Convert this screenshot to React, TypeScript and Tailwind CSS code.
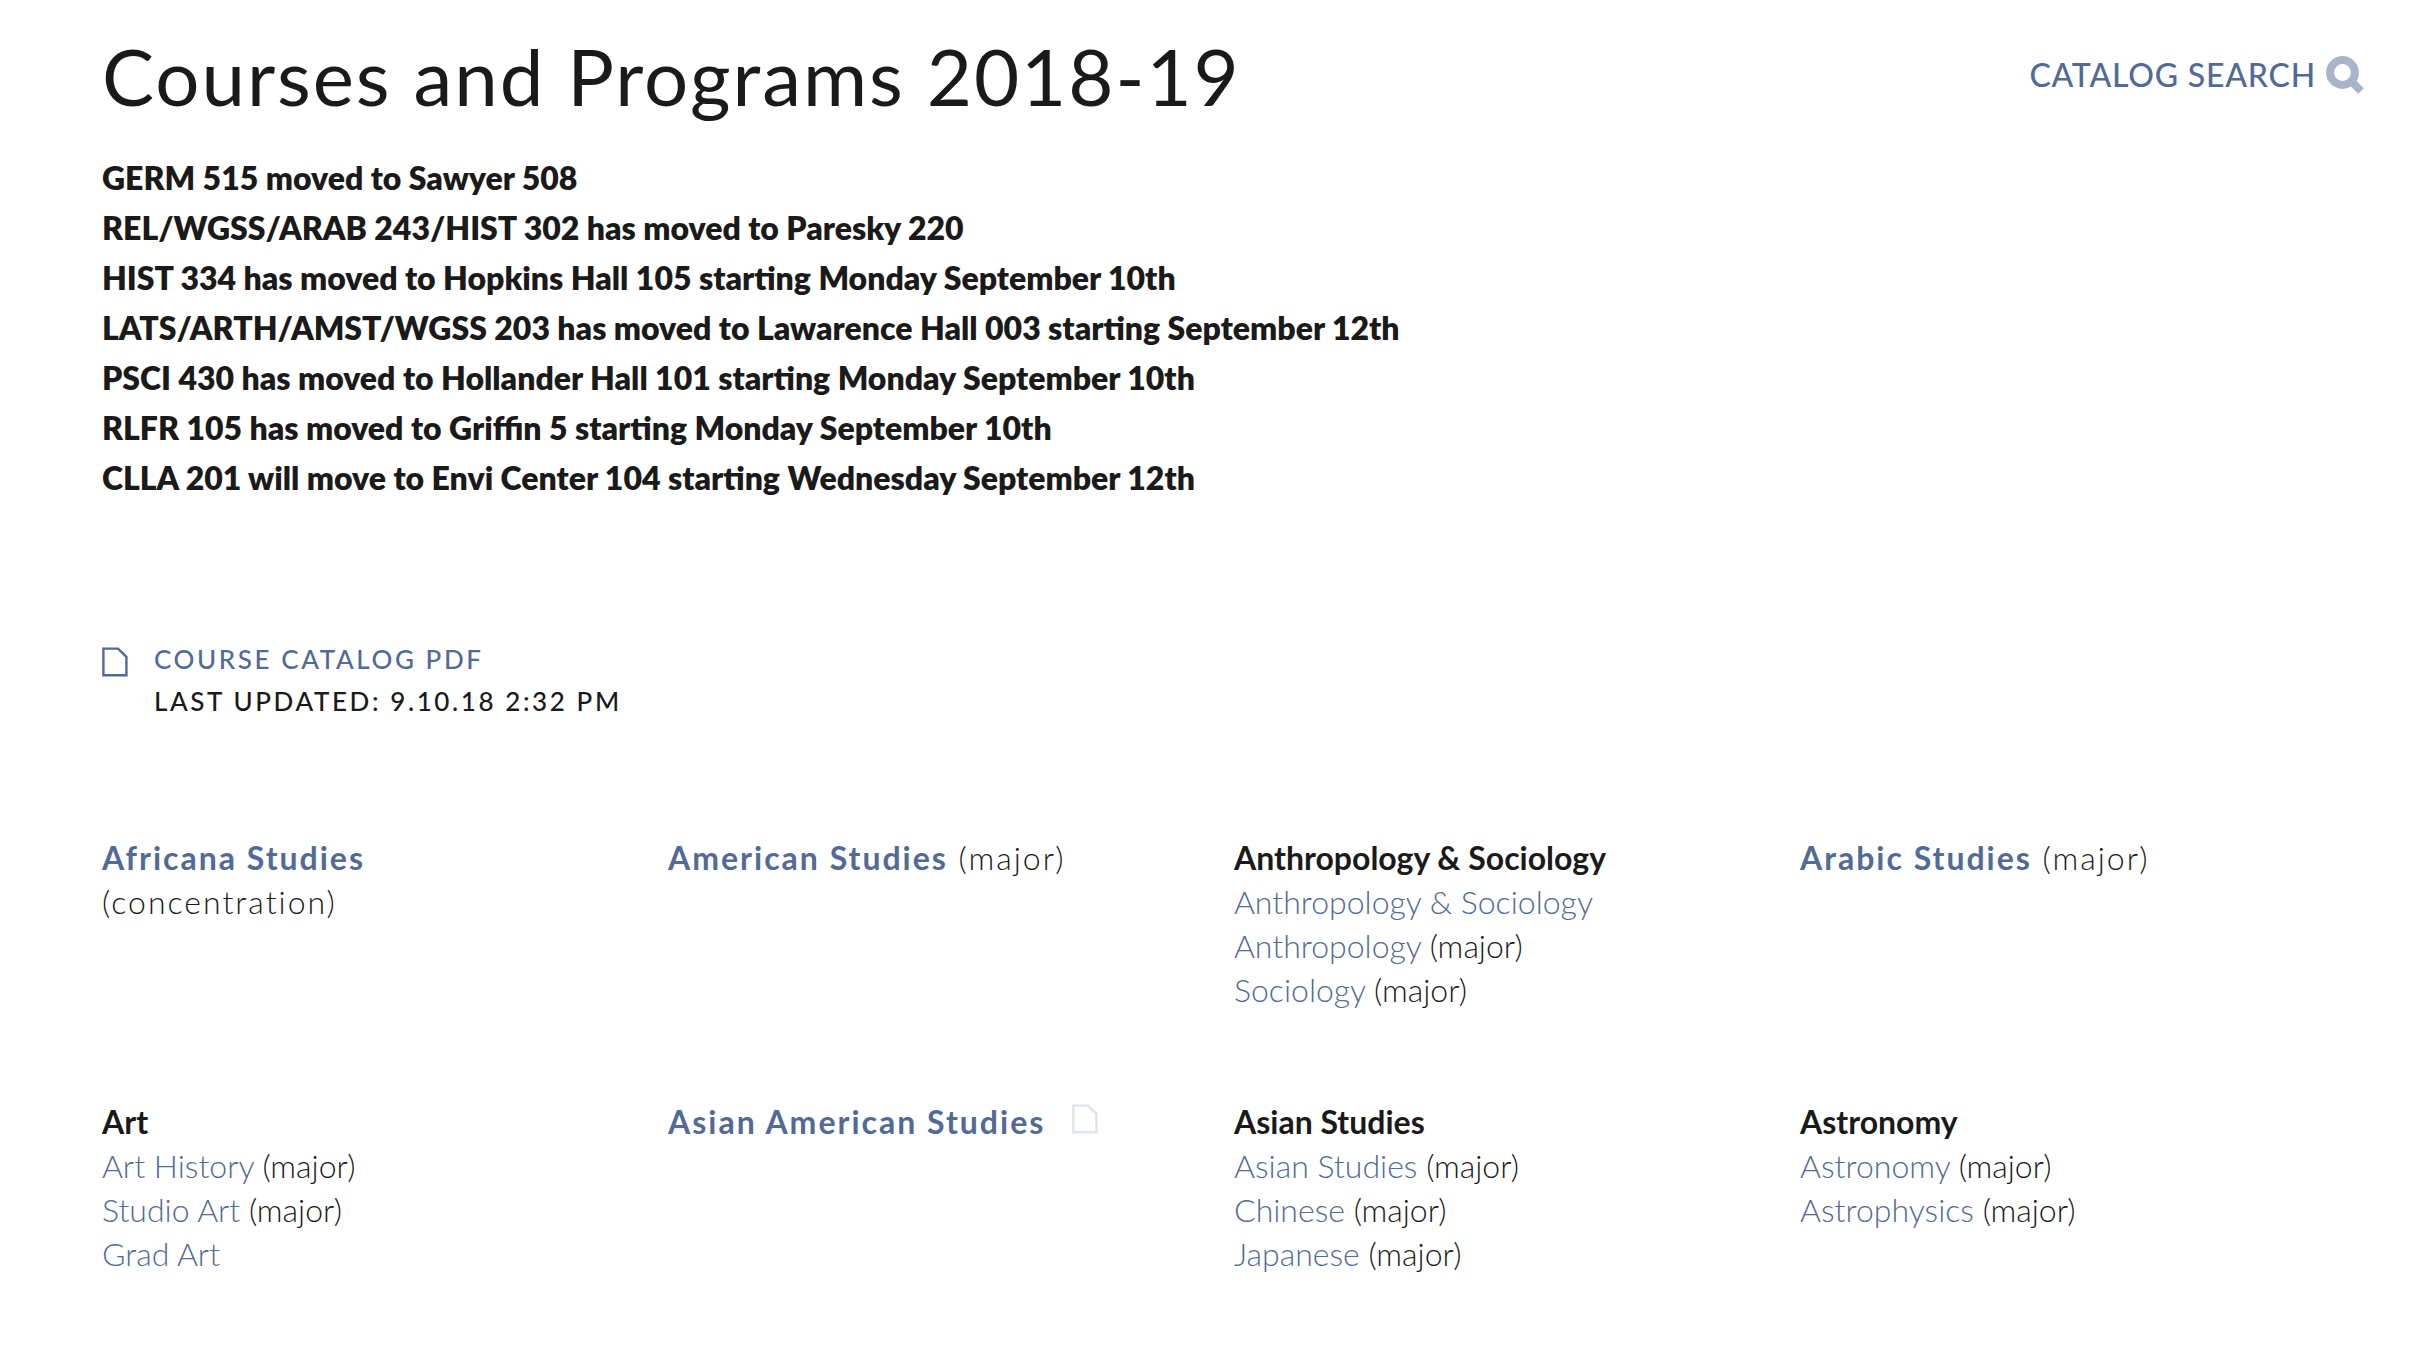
import type { ReactNode } from "react";

type Entry = { name: string; note?: string };
type Program = {
  title: string;
  linked?: boolean;
  note?: string;
  noteBelow?: boolean;
  file?: boolean;
  entries?: Entry[];
};

const notices = [
  "GERM 515 moved to Sawyer 508",
  "REL/WGSS/ARAB 243/HIST 302 has moved to Paresky 220",
  "HIST 334 has moved to Hopkins Hall 105 starting Monday September 10th",
  "LATS/ARTH/AMST/WGSS 203 has moved to Lawarence Hall 003 starting September 12th",
  "PSCI 430 has moved to Hollander Hall 101 starting Monday September 10th",
  "RLFR 105 has moved to Griffin 5 starting Monday September 10th",
  "CLLA 201 will move to Envi Center 104 starting Wednesday September 12th",
];

const programs: Program[] = [
  { title: "Africana Studies", linked: true, note: "(concentration)", noteBelow: true },
  { title: "American Studies", linked: true, note: "(major)" },
  {
    title: "Anthropology & Sociology",
    entries: [
      { name: "Anthropology & Sociology" },
      { name: "Anthropology", note: "(major)" },
      { name: "Sociology", note: "(major)" },
    ],
  },
  { title: "Arabic Studies", linked: true, note: "(major)" },
  {
    title: "Art",
    entries: [
      { name: "Art History", note: "(major)" },
      { name: "Studio Art", note: "(major)" },
      { name: "Grad Art" },
    ],
  },
  { title: "Asian American Studies", linked: true, file: true },
  {
    title: "Asian Studies",
    entries: [
      { name: "Asian Studies", note: "(major)" },
      { name: "Chinese", note: "(major)" },
      { name: "Japanese", note: "(major)" },
    ],
  },
  {
    title: "Astronomy",
    entries: [
      { name: "Astronomy", note: "(major)" },
      { name: "Astrophysics", note: "(major)" },
    ],
  },
];

function FileIcon({ className }: { className: string }) {
  return (
    <svg viewBox="0 0 26 30" className={className} fill="none" stroke="currentColor" strokeWidth="2.4" aria-hidden="true">
      <path d="M1.4 1.6H16L24.4 9.8V28.2H1.4Z" />
    </svg>
  );
}

function SearchIcon() {
  return (
    <svg viewBox="0 0 38 38" className="size-[38px] text-[#a8b4ca]" fill="none" stroke="currentColor" strokeWidth="8" aria-hidden="true">
      <circle cx="16.5" cy="16.5" r="12.4" />
      <path d="M25 25L35 35" />
    </svg>
  );
}

function Link({ children, className = "" }: { children: ReactNode; className?: string }) {
  return (
    <a href="#" className={`text-[#526a96] hover:underline ${className}`}>
      {children}
    </a>
  );
}

function ProgramCard({ program }: { program: Program }) {
  if (program.linked) {
    return (
      <li className="tracking-[2px]">
        <Link className="font-bold">{program.title}</Link>
        {program.noteBelow ? <br /> : " "}
        {program.note}
        {program.file && <FileIcon className="ml-4 inline-block h-[30px] w-[26px] align-baseline text-[#dfe3ec]" />}
      </li>
    );
  }
  return (
    <li>
      <h2 className="font-bold">{program.title}</h2>
      <ul>
        {program.entries?.map((e) => (
          <li key={e.name}>
            <Link>{e.name}</Link> {e.note}
          </li>
        ))}
      </ul>
    </li>
  );
}

export default function App() {
  return (
    <main className="min-h-screen bg-white pt-7 pr-16 pb-16 pl-[102px] font-['Lato',sans-serif] text-[32px] leading-[44px] text-[#1a1a1a]">
      <header className="flex items-start justify-between">
        <h1 className="text-[78px] leading-[96px] tracking-wide">Courses and Programs 2018-19</h1>
        <a href="#" className="mt-[25px] mr-0.5 flex items-center gap-2.5 font-medium tracking-wide text-[#526a96]">
          CATALOG SEARCH
          <SearchIcon />
        </a>
      </header>

      <section className="mt-[29px] text-[32px] leading-[50px] font-extrabold">
        {notices.map((n) => (
          <p key={n}>{n}</p>
        ))}
      </section>

      <section className="mt-[135px] flex items-start text-[26px] leading-[42px] font-medium tracking-widest">
        <FileIcon className="mt-[9px] mr-[26px] h-[30px] w-[26px] text-[#526a96]" />
        <div>
          <Link>COURSE CATALOG PDF</Link>
          <p>LAST UPDATED: 9.10.18 2:32 PM</p>
        </div>
      </section>

      <ul className="mt-[114px] grid grid-cols-4 gap-y-[88px] font-light">
        {programs.map((p) => (
          <ProgramCard key={p.title} program={p} />
        ))}
      </ul>
    </main>
  );
}
